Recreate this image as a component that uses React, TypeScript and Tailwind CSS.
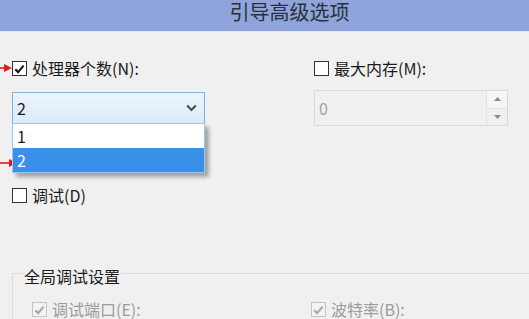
import React from 'react'

// Boot advanced options dialog (msconfig style)

const font = { fontFamily: '"Noto Sans CJK SC", "Noto Sans", sans-serif' }

function CheckBox({ checked, disabled }: { checked?: boolean; disabled?: boolean }) {
  return (
    <span
      className={`w-[15px] h-[15px] shrink-0 border flex items-center justify-center ${
        disabled ? 'border-[#c4c4c4] bg-[#f3f3f3]' : 'border-[#333333] bg-white'
      }`}
    >
      {checked && (
        <svg width="11" height="10" viewBox="0 0 11 10">
          <path
            d="M1.3 5.3 L4.1 8.1 L9.6 1.6"
            fill="none"
            stroke={disabled ? '#a9a9a9' : '#1a1a1a'}
            strokeWidth="2.2"
          />
        </svg>
      )}
    </span>
  )
}

function CheckRow({ label, checked, disabled }: { label: string; checked?: boolean; disabled?: boolean }) {
  return (
    <div className="h-[15px] flex items-center gap-[5px]">
      <CheckBox checked={checked} disabled={disabled} />
      <span className={`text-[16px] leading-[15px] whitespace-nowrap ${disabled ? 'text-[#9c9c9c]' : 'text-[#1b1b1b]'}`}>
        {label}
      </span>
    </div>
  )
}

function RedArrow({ length }: { length: number }) {
  return (
    <svg width={length} height="10" viewBox={`0 0 ${length} 10`}>
      <line x1="0" y1="5" x2={length - 6} y2="5" stroke="#e01a22" strokeWidth="1.6" />
      <path d={`M${length - 8} 1 L${length} 5 L${length - 8} 9 Z`} fill="#e01a22" />
    </svg>
  )
}

export default function App() {
  return (
    <div className="w-[529px] h-[319px] overflow-hidden bg-[#f0f0f0] relative" style={font}>
      {/* title bar - dialog is cropped, so title sits right of centre */}
      <div className="h-[31px] bg-[#8ea4da] flex justify-center pl-[50px] text-[20px] leading-[24px] text-[#2b2f3c]">
        引导高级选项
      </div>
      <div className="h-px bg-[#e4e9f6]" />

      <div className="px-[12px] pt-[29px]">
        <div className="flex">
          {/* left column */}
          <div className="w-[193px]">
            <CheckRow label="处理器个数(N):" checked />
            <div className="relative mt-[16px] h-[32px] border border-[#7db2e8] bg-gradient-to-b from-[#edf5fd] to-[#d9eafb] flex items-center justify-between pl-[4px] pr-[7px]">
              <span className="text-[16px] text-[#1b1b1b]">2</span>
              <svg width="11" height="8" viewBox="0 0 11 8">
                <path d="M1.2 1.5 L5.5 6 L9.8 1.5" fill="none" stroke="#4a4a4a" strokeWidth="2" />
              </svg>

              <div className="absolute left-[-1px] right-[-1px] top-full z-10 border border-[#9dc5ee] bg-white shadow-[4px_4px_4px_rgba(0,0,0,0.32)]">
                <div className="h-[24px] pl-[4px] flex items-center text-[16px] text-[#1b1b1b]">1</div>
                <div className="h-[24px] pl-[4px] flex items-center text-[16px] text-white bg-[#3a90e8]">2</div>
              </div>
            </div>
            <div className="mt-[64px]">
              <CheckRow label="调试(D)" />
            </div>
          </div>

          {/* right column */}
          <div className="ml-[109px] w-[194px]">
            <CheckRow label="最大内存(M):" />
            <div className="mt-[14px] h-[36px] border border-[#d9d9d9] bg-[#f0f0f0] flex">
              <span className="flex-1 pl-[4px] flex items-center text-[16px] text-[#a3a3a3]">0</span>
              <div className="w-[21px] flex flex-col border-l border-[#e2e2e2]">
                <div className="flex-1 bg-[#f6f6f6] border-b border-[#e2e2e2] flex items-center justify-center">
                  <svg width="7" height="4" viewBox="0 0 7 4">
                    <path d="M0 4 L3.5 0 L7 4 Z" fill="#8a8a8a" />
                  </svg>
                </div>
                <div className="flex-1 bg-[#f0f0f0] flex items-center justify-center">
                  <svg width="7" height="4" viewBox="0 0 7 4">
                    <path d="M0 0 L7 0 L3.5 4 Z" fill="#8a8a8a" />
                  </svg>
                </div>
              </div>
            </div>
          </div>
        </div>

        <fieldset className="mt-[57px] w-[540px] border border-[#dcdcdc] h-[90px]">
          <legend className="ml-[10px] px-[1px] pt-[6px] text-[16px] leading-[20px] text-[#1b1b1b]">全局调试设置</legend>
          <div className="mt-[16px] pl-[19px] flex">
            <div className="w-[279px]">
              <CheckRow label="调试端口(E):" checked disabled />
            </div>
            <CheckRow label="波特率(B):" checked disabled />
          </div>
        </fieldset>
      </div>

      {/* annotation arrows */}
      <div className="absolute left-0 top-[63px]">
        <RedArrow length={12} />
      </div>
      <div className="absolute left-0 top-[158px]">
        <RedArrow length={17} />
      </div>
    </div>
  )
}
